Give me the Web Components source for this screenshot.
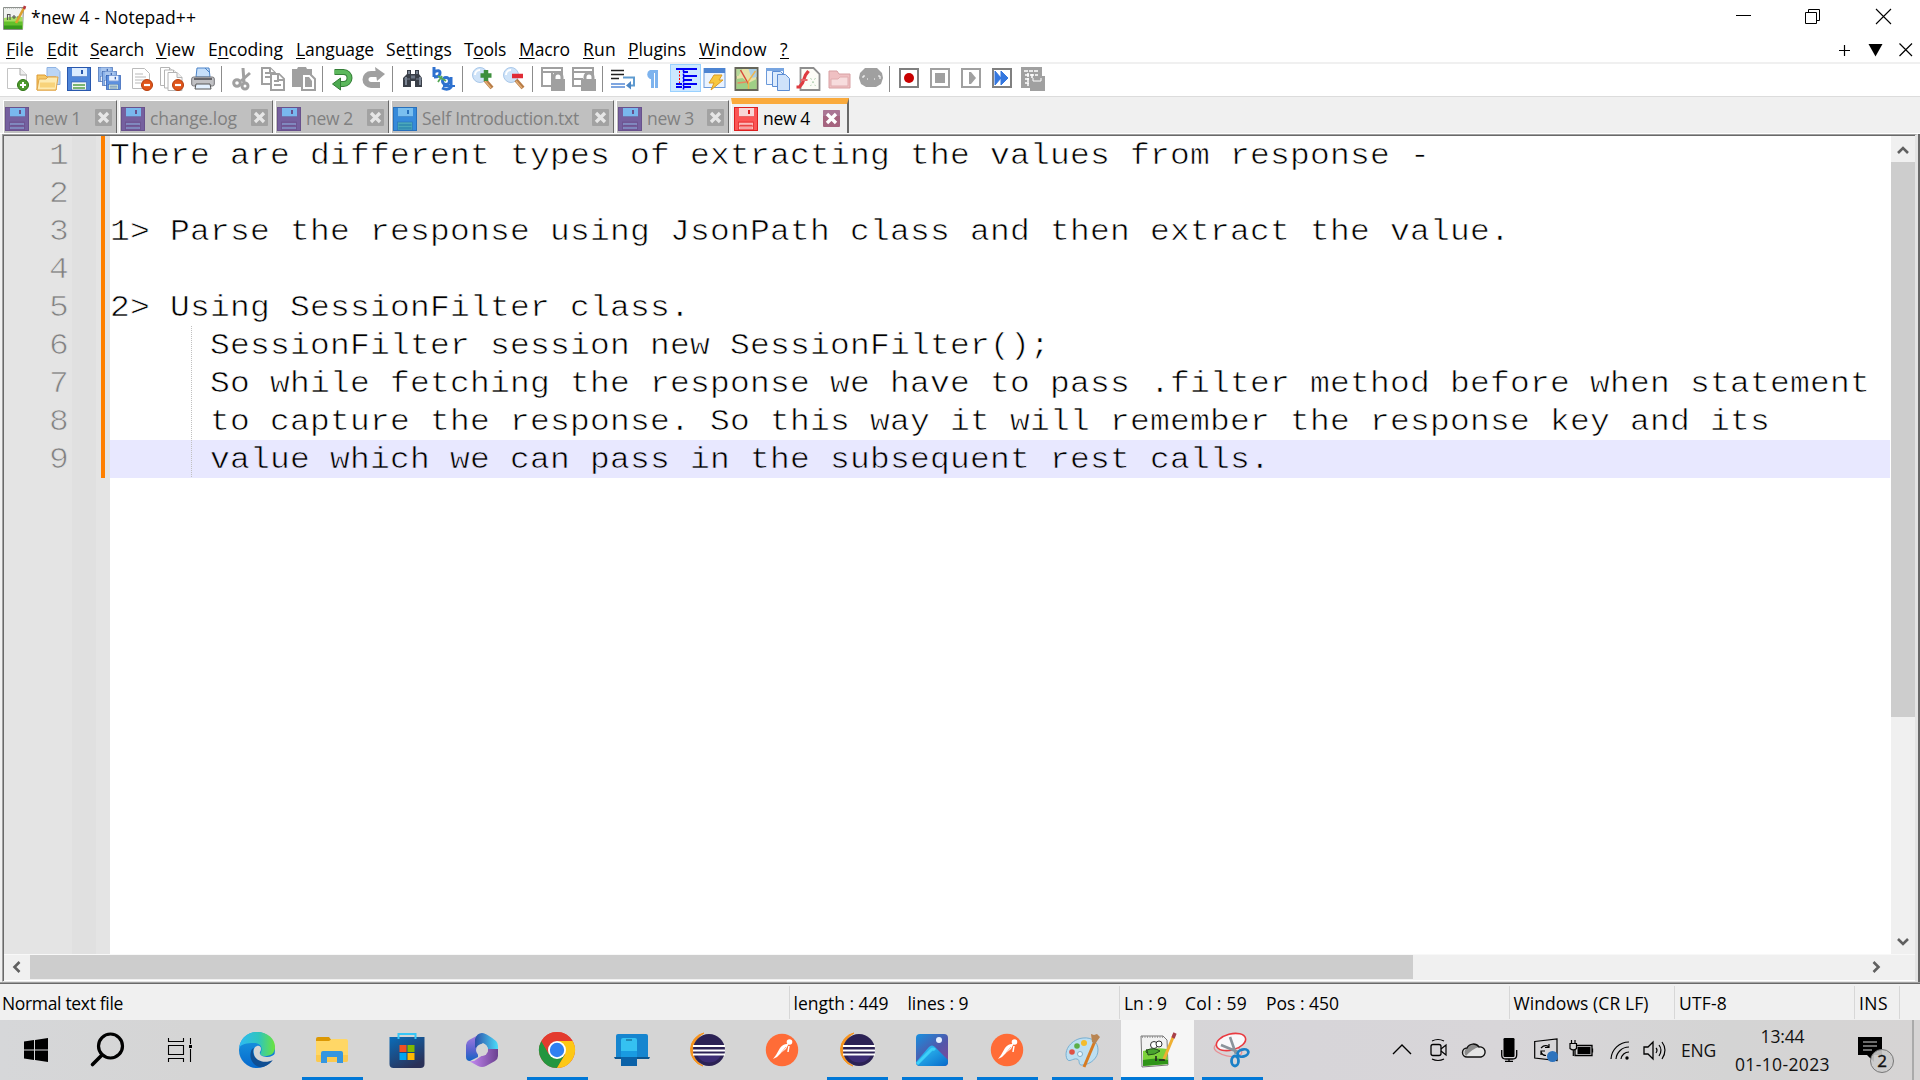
<!DOCTYPE html>
<html lang="en">
<head>
<meta charset="utf-8">
<title>*new 4 - Notepad++</title>
<style>
html,body{margin:0;padding:0;width:1920px;height:1080px;overflow:hidden;background:#fff}
body{font-family:"Open Sans","Noto Sans",sans-serif;font-size:17.5px;color:#000}
</style>
</head>
<body>
<npp-desktop></npp-desktop>
<script>
const floppy=(edge,body,metal,label)=>`<rect x=".5" y=".5" width="23" height="23" fill="${body}" stroke="${edge}"/><rect x="5" y="1" width="15" height="9" fill="${metal}"/><path d="M5 9.5h15" stroke="${edge}" opacity=".6"/><rect x="14" y="3" width="2" height="4" fill="${edge}"/><rect x="4.500" y="15" width="15" height="8" fill="${label}" stroke="${edge}" stroke-width=".6"/><path d="M6 18h12M6 21h12" stroke="${edge}" stroke-width="1.500" opacity=".75"/>`;
const page=(x,y,c='#b4b4b4')=>`<path d="M${x} ${y}h9l5 5v13h-14z" fill="#fff" stroke="${c}"/><path d="M${x+9} ${y}v5h5" fill="#eee" stroke="${c}"/>`;
const minus=`<circle cx="18" cy="18" r="5.500" fill="#e0561b" stroke="#b53c0c"/><path d="M15 18h6" stroke="#fff" stroke-width="2.200"/>`;
const frame=(c,s)=>`<rect x="2" y="2" width="18" height="18" fill="#fff" stroke="${c}" stroke-width="2"/><g transform="translate(-1 0)">${s}</g>`;
const lens=`<circle cx="9" cy="8" r="7.500" fill="#cfe3f8" stroke="#a9c8ea"/><path d="M4 8a5 5 0 0 1 5-5" stroke="#fff" stroke-width="2" fill="none"/><path d="M14 13l7 8" stroke="#b77b45" stroke-width="4"/><path d="M14 14l6 7" stroke="#e5b078" stroke-width="1.200"/>`;
const eclipse=`<path d="M15 1A17 17 0 0 0 14 34A19 19 0 0 1 15 1z" fill="#f7941e" stroke="#f7941e"/><circle cx="20" cy="18" r="16" fill="#2c2255"/><path d="M8 23h24a13 12 0 0 1-24 0z" fill="#42327f" opacity=".75"/><path d="M4 14h32M4 18.500h32M4 22.500h32" stroke="#fff" stroke-width="2.200"/>`;
const postman=`<circle cx="18" cy="18" r="16.200" fill="#ff6c37"/><circle cx="25.500" cy="10" r="2.800" fill="#fff"/><path d="M23 12q-4 0-7 4l-4 7-3 4 4-2 4-4 5-4 3-6z" fill="#fff"/><path d="M25 14l-1 6" stroke="#fff" stroke-width="1.500"/><path d="M22 15l-5 6" stroke="#ff9c79" stroke-width=".8"/>`;
const ICONS={
 app:[24,`<path d="M.5 1.500h20l-1 22H.5z" fill="#f0f2f0" stroke="#8a8f8a"/><path d="M1 12q9-2 18.500-1v12H1z" fill="#a5dd63"/><path d="M1 15.500h18.500V23H1z" fill="#63c02c"/><path d="M1 19.500h18V23H1z" fill="#37991c"/><path d="M2 2h18" stroke="#999" stroke-dasharray="1 1"/><path d="M4.500 14V8.500h2.500V14M9 11h4M11 9v4M14 11h3" stroke="#555" stroke-width="1.100" fill="none"/><path d="M21 2L13 17" stroke="#dca02f" stroke-width="2.600"/><path d="M22 0l-1 3" stroke="#b7383f" stroke-width="2.600"/>`],
 new:[24,`<path d="M2.500 1.500h13l6 6v14h-19z" fill="#fff" stroke="#c4c4c4"/><path d="M15 1v7h7" fill="#eee" stroke="#aaa"/><circle cx="18" cy="18" r="5.500" fill="#4d9a2b" stroke="#2e7415"/><path d="M15 18h6M18 15v6" stroke="#fff" stroke-width="2"/>`],
 open:[24,`<path d="M11 .5h9l4 4v13H11z" fill="#bad5f6" stroke="#8fb3e3"/><path d="M1 8h8l2 2h9v13H1z" fill="#f5c866" stroke="#dd9a35"/><path d="M3 12h7l2-2h10l-2 13H1z" fill="#fdebb2" stroke="#e2a545"/><path d="M4 18h15" stroke="#f8d37a" stroke-width="5"/>`],
 save:[24,floppy('#2857ad','#4f86da','#dcecff','#f2f8f2')+'<path d="M6 18h12M6 21h12" stroke="#79bd55" stroke-width="1.500"/>'],
 saveall:[24,`<g transform="scale(.62)">${floppy('#3e66ad','#8cb3ea','#a9c6ee','#fff')}</g><g transform="translate(4 4) scale(.62)">${floppy('#3e66ad','#8cb3ea','#a9c6ee','#fff')}</g><g transform="translate(8 8) scale(.62)">${floppy('#2857ad','#5d90de','#e8f1ff','#e4f3da')}</g>`],
 close:[24,`<path d="M3.500 1.500h12l5 5v15h-17z" fill="#fff" stroke="#bbb"/><path d="M6 7h8M6 10h11M6 13h11M6 16h6" stroke="#b9b9b9"/>${minus}`],
 closeall:[24,page(.5,.5)+page(4.5,3)+page(8,5.5)+minus],
 print:[24,`<path d="M6 1h12l1 9H5z" fill="#c6dffa" stroke="#4a83c8"/><path d="M14 1l5 5" stroke="#4a83c8"/><rect x=".7" y="10" width="22.600" height="9" rx="2" fill="#c1c1c4" stroke="#747478"/><path d="M3 12h18" stroke="#65656a" stroke-width="2"/><path d="M5 17h14l1 5H4z" fill="#e4f1ff" stroke="#555"/>`],
 cut:[24,`<g stroke="#a0a0a0" fill="none" stroke-width="3"><path d="M13 1l1 14M20 6l-9 8"/><circle cx="7" cy="16" r="3.300"/><circle cx="15" cy="19" r="3"/></g>`],
 copy:[24,`<g fill="#fff" stroke="#a0a0a0" stroke-width="2"><path d="M1 1h8l5 5v11H1z"/><path d="M4 6h5M4 10h5M9 1v5h5"/><path d="M10 7h8l5 5v11H10z"/><path d="M13 14h5M13 18h7M17 7v6h6"/></g>`],
 paste:[24,`<path d="M0 2h5l1-2h8l1 2h5v18H0z" fill="#a0a0a0"/><path d="M10 7h8l5 5v11H10z" fill="#fff" stroke="#a0a0a0" stroke-width="2"/><path d="M13 10h4l3 4v6h-7z" fill="#a0a0a0"/>`],
 undo:[24,`<g transform="translate(-.5 0)"><path d="M4 5h9a5 5 0 0 1 0 12H9" fill="none" stroke="#357f38" stroke-width="6"/><path d="M4 5h9a5 5 0 0 1 0 12H9" fill="none" stroke="#5cb85c" stroke-width="4"/><path d="M2 17l8-6v12z" fill="#4da950" stroke="#357f38"/></g>`],
 redo:[24,`<path d="M15 7H9a5 5 0 0 0 0 11h9" fill="none" stroke="#a0a0a0" stroke-width="6"/><path d="M13 0l10 7-8 7z" fill="#a0a0a0"/>`],
 find:[24,`<path d="M6 3h4v4h4V3h4v4l3 4v9h-7v-6h-4v6H2v-9l4-4z" fill="#3a3f48"/><path d="M5 10v8M19 10v8M8 4v3M16 4v3" stroke="#9aa5b5" stroke-width="1.400"/><path d="M3 12h6M15 12h6" stroke="#737d8c" stroke-width="1.200"/><path d="M10 10h4" stroke="#6d7684" stroke-width="3"/>`],
 replace:[24,`<g fill="none" stroke="#2e71cf" stroke-width="3"><path d="M2 0v10M2 5q6-3 6 1t-6 4"/><circle cx="14" cy="14" r="3.500"/><path d="M19 10v10q-3 4-9 1"/></g><path d="M6 9l8 5M10 9l-4 6" stroke="#56a956" stroke-width="1.800"/><path d="M11 19h12" stroke="#2e71cf" stroke-width="2"/>`],
 zin:[24,lens+`<path d="M15 3v11M9.500 8.500h11" stroke="#3c8f3c" stroke-width="4.500"/>`],
 zout:[24,lens+`<path d="M10 9h11" stroke="#e02b35" stroke-width="4.500"/>`],
 syncv:[24,`<path d="M1 1h20v18H1zM1 5h20M11 5v14" fill="none" stroke="#a0a0a0" stroke-width="2"/><path d="M13 12v-2a4 4 0 0 1 8 0v2" fill="none" stroke="#a0a0a0" stroke-width="3"/><path d="M10 12h14v12H10z" fill="#a0a0a0"/>`],
 synch:[24,`<path d="M1 1h20v18H1zM1 5h20M1 12h10" fill="none" stroke="#a0a0a0" stroke-width="2"/><path d="M13 12v-2a4 4 0 0 1 8 0v2" fill="none" stroke="#a0a0a0" stroke-width="3"/><path d="M9 12h15v12H9z" fill="#a0a0a0"/>`],
 wrap:[24,`<path d="M0 3.500h13M0 7.500h13" stroke="#222" stroke-width="1.500"/><path d="M0 11.500h8" stroke="#222" stroke-width="1.500"/><path d="M0 17h14M0 20h14" stroke="#7fa6e0" stroke-width="2"/><path d="M12 10.500h11v8h-4" fill="none" stroke="#5f9bd0" stroke-width="2"/><path d="M20 14l-5 4.500 5 4z" fill="#4c86c4"/>`],
 para:[24,`<path d="M16 3H8a5 5 0 0 0 0 9h1v9h3V6h1v15h3z" fill="#7db3ee"/>`],
 indent:[24,`<path d="M2 2h21M9 5h5M9 9h14M9 13h9M2 17h6M9 17h14M2 20h6M9 20h8" stroke="#0000f5" stroke-width="2"/><path d="M5.500 4v12" stroke="#f00" stroke-dasharray="2 1.500"/><path d="M9.500 3v20" stroke="#00f" stroke-width="1.600" stroke-dasharray="2 1.500"/>`],
 flash:[24,`<rect x="0" y="1.500" width="21" height="19" fill="#eaf3ff" stroke="#6d9bdb"/><path d="M0 1h21v5H0z" fill="#4d84d2"/><path d="M10 8h8l-3 5h4L7 23l3-7H5z" fill="#f8c73f" stroke="#dc9b25"/>`],
 map:[24,`<g transform="translate(-.5 0)"><rect x="1" y="1" width="22" height="22" fill="#e6e2a8" stroke="#66665a" stroke-width="2"/><path d="M2 12l6-1 6 5 8-4v10H2z" fill="#9fcf86"/><path d="M14 2h8v8l-5 1z" fill="#a9cfe6"/><path d="M2 2h6l-4 7H2z" fill="#b5d99a"/><path d="M6 3l8 14" stroke="#d9493a" stroke-width="1.500"/><path d="M21 4L14 14v8" stroke="#efb34b" stroke-width="1.400" fill="none"/><path d="M3 16l9-1" stroke="#e9895e" stroke-width="1.300"/></g>`],
 docs:[24,`<path d="M.5 1.500h17v16H.5z" fill="#eef5ff" stroke="#6b9ada"/><path d="M0 1h18v3H0z" fill="#78a5e0"/><path d="M6.500 4.500h8l3 3v12h-11z" fill="#dcebfc" stroke="#5c8dd4"/><path d="M11.500 7.500h8l4 4v12h-12z" fill="#cfe2fa" stroke="#5c8dd4"/>`],
 func:[24,`<g transform="translate(-.5 0)"><path d="M4 1h13l6 6v16H4z" fill="#fcfcf6" stroke="#8e8e8e" stroke-width="1.800"/><path d="M0 20h3l3-4 3-8 3-4" fill="none" stroke="#df3b40" stroke-width="3.200"/><path d="M4 13h7" stroke="#e5686b" stroke-width="2"/><path d="M14 11l5 8M19 11l-5 8" stroke="#b5d3b5" stroke-dasharray="2 2"/></g>`],
 folder:[24,`<path d="M1 4h8l2 3h11v14H1z" fill="#efc0c2" stroke="#d8a0a3"/><path d="M3 12h7l2-2h8v9H3z" fill="#f7dcdd" stroke="#e0adb0"/>`],
 eye:[24,`<path d="M6 1h12l5 5 1 5-2 6-5 3H7l-5-3-2-6 1-5z" fill="#a0a0a0"/><path d="M4 11v-2h2M19 9h2v3M8 12h1M15 12h1" stroke="#fff" fill="none"/>`],
 rec:[24,frame('#808080','<circle cx="12" cy="11" r="5" fill="#c80000"/>')],
 stop:[24,frame('#a0a0a0','<path d="M7 6h10v10H7z" fill="#a0a0a0"/>')],
 play:[24,frame('#a0a0a0','<path d="M10 5v12h2l5-6-5-6z" fill="#a0a0a0"/>')],
 ff:[24,frame('#808080','<path d="M5 4v14l6-7zM11 4v14l7-7z" fill="#3477df" stroke="#3477df"/>')],
 macro:[24,`<g transform="translate(-1 0)"><path d="M0 0h21v9h3v15H9v-3H0z" fill="#a0a0a0"/><path d="M3 4h15M4 8h13M4 12h5M4 16h5M7 6v13M11 7v5" stroke="#fff" stroke-width="1.500" stroke-dasharray="4 1"/><path d="M12 11v3h8v-3" stroke="#fff" fill="none"/></g>`],
 fblue:[24,floppy('#68518c','#75609f','#79b8ee','#755a99')+'<path d="M5 17h14M5 21h14" stroke="#8fb7e7" stroke-width="1.200"/>'],
 fsaved:[24,floppy('#2870bb','#368ada','#7abfef','#4ba8ba')+'<path d="M5 18h14M5 21h14" stroke="#3295a9" stroke-width="1.200"/>'],
 fred:[24,floppy('#dc2020','#fb5555','#f8d7d7','#fa7777')+'<path d="M5 17h14M5 21h14" stroke="#fff" stroke-width="1.200"/>'],
 x0:[17,`<rect width="17" height="17" rx="1" fill="#a2a2a2"/><path d="M4 4l9 9M13 4l-9 9" stroke="#e6e6e6" stroke-width="3.300"/>`],
 x1:[17,`<rect width="17" height="17" rx="1" fill="#a5647f"/><path d="M0 0h17v6H0z" fill="#b28caf" opacity=".45"/><path d="M4 4l9 9M13 4l-9 9" stroke="#fff" stroke-width="3.300"/>`],
 min:[16,`<path d="M1 8.500h15" stroke="#000"/>`],
 max:[16,`<path d="M.5 3.500h11v11H.5zM3.500 3.500v-3h11v11h-3" fill="none" stroke="#000"/>`],
 cls:[16,`<path d="M1 0l15 15M16 0L1 15" stroke="#000" stroke-width="1.100"/>`],
 plus:[14,`<path d="M2 7.500h11M7.500 2v11" stroke="#000" stroke-width="1.200"/>`],
 down:[14,`<path d="M.5 1h14l-7 12.500z"/>`],
 cls2:[14,`<path d="M.5.500l12.500 12.500M13 .5L.5 13" stroke="#000" stroke-width="1.200"/>`],
 au:[12,`<path d="M1 9l5-5 5 5" fill="none" stroke="#606060" stroke-width="2.600"/>`],
 ad:[12,`<path d="M1 3l5 5 5-5" fill="none" stroke="#606060" stroke-width="2.600"/>`],
 al:[12,`<path d="M8.500 1l-5 5 5 5" fill="none" stroke="#606060" stroke-width="2.600"/>`],
 ar:[12,`<path d="M3.500 1l5 5-5 5" fill="none" stroke="#606060" stroke-width="2.600"/>`],
 win:[24,`<path d="M0 3.400L10 2v9.500H0zM11 1.900L24 0v11.500H11zM0 12.500h10V22L0 20.600zM11 12.500h13V24l-13-1.900z"/>`],
 search:[36,`<circle cx="20.500" cy="14" r="12" fill="none" stroke="#000" stroke-width="3.200"/><path d="M12 23L2.500 32.500" stroke="#000" stroke-width="3.600" stroke-linecap="round"/>`],
 task:[24,`<path d="M.5 0v3.500h15V0M.5 7.500h15v9H.5zM.5 24v-3.500h15V24M22.500 0v6M22.500 11v13" fill="none" stroke="#000" stroke-width="1.100"/><path d="M21 7h3v3h-3z"/>`],
 edge:[36,`<defs><linearGradient id="a"><stop stop-color="#2ebaf5"/><stop offset=".55" stop-color="#2fc5bd"/><stop offset="1" stop-color="#6be43b"/></linearGradient><linearGradient id="b" x2="0" y2="1"><stop stop-color="#1b9de2"/><stop offset="1" stop-color="#0669cd"/></linearGradient></defs><circle cx="18" cy="18" r="18" fill="url(#b)"/><path d="M0 16C2 5 9 0 18 0c11 0 18 7 18 15 0 7-5 9-10 9-4 0-6-1-4-4 2-5-1-9-7-9C8 11 2 12 0 16z" fill="url(#a)"/><path d="M13 17c-5 10 3 19 10 18C29 34 33 30 34 27c-8 4-18 2-20-6 0-2 0-3 1-5z" fill="#104f93"/><path d="M18 14c4-1 5 3 3 6-1 3 2 5 7 5 4 0 7-2 9-4v5l-3 2c-8 4-18 1-19-6-1-4 0-7 3-8z" fill="#d5d5d5"/>`],
 explorer:[36,`<path d="M2 7q0-2 2-2h11l3 4H2z" fill="#dc9804"/><path d="M2 9h13l3-2h14q2 0 2 2v19q0 2-2 2H4q-2 0-2-2z" fill="#ffd766"/><path d="M2 23h32v5q0 2-2 2H4q-2 0-2-2z" fill="#fbc94e"/><path d="M7 31V21q0-2 2-2h18q2 0 2 2v10h-6v-6H13v6z" fill="#3596e0"/>`],
 store:[36,`<defs><linearGradient id="a" x2=".6" y2="1"><stop stop-color="#0a6dba"/><stop offset="1" stop-color="#2a3158"/></linearGradient></defs><path d="M.5 5h35v27q0 4-4 4h-27q-4 0-4-4z" fill="url(#a)"/><path d="M9.500 7V2h17v5" fill="none" stroke="#37c6f6" stroke-width="2"/><path d="M10.500 13h7v7h-7z" fill="#f25022"/><path d="M18.500 13h7v7h-7z" fill="#7fba00"/><path d="M10.500 21h7v7h-7z" fill="#00a4ef"/><path d="M18.500 21h7v7h-7z" fill="#ffb900"/>`],
 m365:[36,`<defs><linearGradient id="a" x2="0" y2="1"><stop stop-color="#b180e3"/><stop offset=".6" stop-color="#5a63d0"/><stop offset="1" stop-color="#1466c4"/></linearGradient><linearGradient id="b"><stop stop-color="#2e4fa8"/><stop offset="1" stop-color="#4bdcfa"/></linearGradient><linearGradient id="c"><stop stop-color="#c78bf5"/><stop offset="1" stop-color="#6b4190"/></linearGradient></defs><path d="M18 1l-13 7q-3 2-3 5v12q0 4 4 4l8-4V12q0-2 2-3l7-6z" fill="url(#a)"/><path d="M18 1q4 0 14 8 2 2 2 5v10l-10-6q0-5-5-7l-8 5V7q2-6 7-6z" fill="url(#b)"/><path d="M34 17v7q0 3-3 5l-9 5q-4 2-8 0l-9-5q5 1 8-2l9-6q2-1 2-4z" fill="url(#c)"/><circle cx="18" cy="18" r="6" fill="#d5d5d5"/>`],
 chrome:[36,`<circle cx="18" cy="18" r="18" fill="#ea4335"/><path d="M2.400 9A18 18 0 0 0 18 36l8-13.500L10.200 22.500z" fill="#24963f"/><path d="M18 36A18 18 0 0 0 33.600 9H18l8 13.500z" fill="#fdc815"/><path d="M2.400 9l7.800 13.500L18 9h15.600A18 18 0 0 0 2.400 9z" fill="#e33b2e"/><circle cx="18" cy="18" r="9" fill="#fff"/><circle cx="18" cy="18" r="7.200" fill="#3080f2"/>`],
 phone:[36,`<path d="M2 4q0-2 2-2h28q2 0 2 2v21H2z" fill="#1685cf"/><path d="M0 25h36l-1 2H1z" fill="#0d568f"/><path d="M7 8q0-2 2-2h12q2 0 2 2v11H7z" fill="#35c1f1"/><path d="M7 19h16v7H7z" fill="#199be2"/><path d="M7 25h16v9H7z" fill="#0b62a8"/><path d="M12 8h6" stroke="#14658f" stroke-width="1.200"/>`],
 eclipse:[36,eclipse],postman:[36,postman],
 photos:[36,`<defs><linearGradient id="a" x2=".8" y2="1"><stop stop-color="#1790df"/><stop offset=".6" stop-color="#5355a9"/><stop offset="1" stop-color="#7b4b9b"/></linearGradient><linearGradient id="b" y2="1"><stop stop-color="#35cdfa"/><stop offset="1" stop-color="#0869c9"/></linearGradient></defs><rect x="2" y="2" width="32" height="32" rx="4" fill="url(#a)"/><path d="M2 30l13-15q3-3 6 0l13 13v2q0 4-4 4H6q-4 0-4-4z" fill="url(#b)"/><path d="M3 32l14-14q2-2 4 0" stroke="#3ed0f8" stroke-width="3" fill="none"/><circle cx="25" cy="8" r="3" fill="#e5efff"/>`],
 paint:[36,`<path d="M3 27C-1 18 8 7 19 6c9-1 15 4 15 12 0 8-7 14-15 15-6 1-2-5-6-6-4-1-8 4-10 0z" fill="#bddff1" stroke="#79afd1"/><circle cx="8" cy="20" r="2.800" fill="#df5145"/><circle cx="13" cy="14" r="2.800" fill="#5bae48"/><circle cx="20" cy="11" r="3" fill="#f4bc2c"/><circle cx="16" cy="22" r="2.500" fill="#eff8fd" stroke="#83adc5"/><path d="M31 9L20 35" stroke="#d77b22" stroke-width="3"/><path d="M27 2l3 1 3-1 3 3-5 7-3-2z" fill="#b98552"/>`],
 npp:[36,`<path d="M2 4h22l4 4 1 25-26 2z" fill="#f2f2f2" stroke="#777"/><path d="M3 5h21" stroke="#888" stroke-width="1.500" stroke-dasharray="1 1.500"/><path d="M4 19q12-4 24-2l1 15-25 2z" fill="#7dd23a"/><path d="M4 28q15-3 25 0v4l-25 2z" fill="#2f9418"/><circle cx="15" cy="13" r="3.500" fill="#fff" stroke="#333"/><circle cx="20" cy="12" r="3" fill="#fff" stroke="#333"/><path d="M8 18q7-3 13 1-5 4-12 4zM8 21q-2-1 0-4" fill="#4aa52f" stroke="#234f1b"/><path d="M17 24v5M20 28h6" stroke="#222" stroke-width="1.600"/><path d="M35 3L25 27" stroke="#efb033" stroke-width="3"/><path d="M36 1l-2 5" stroke="#a83f4a" stroke-width="3.400"/>`],
 snip:[36,`<ellipse cx="14" cy="18" rx="14" ry="6" fill="none" stroke="#e88f94" stroke-width="1.300" transform="rotate(12 14 18)"/><ellipse cx="17" cy="10" rx="15" ry="8" fill="#f8f8fa" stroke="#e93a40" stroke-width="1.600" transform="rotate(-15 17 10)"/><path d="M16 5l6 17M7 13l17 7" stroke="#8a939b" stroke-width="2.600"/><ellipse cx="29" cy="21" rx="5.500" ry="3.500" fill="none" stroke="#1b80c7" stroke-width="2.800" transform="rotate(-15 29 21)"/><ellipse cx="21" cy="29" rx="3.500" ry="5" fill="none" stroke="#1b80c7" stroke-width="2.800"/>`],
 tchev:[24,`<path d="M3 16l9-9 9 9" fill="none" stroke="#000" stroke-width="1.400"/>`],
 meet:[24,`<rect x="4" y="6.500" width="10" height="11" rx="2" fill="none" stroke="#000" stroke-width="1.300"/><path d="M14 11l5-4v10l-5-4M5 3q6-3 12 0M5 21q6 3 12 0" fill="none" stroke="#000" stroke-width="1.200"/>`],
 cloud:[24,`<path d="M5 19a4.500 4.500 0 0 1 0-9 7 7 0 0 1 12-1 5 5 0 0 1 2 10z" fill="#e5e5e5"/><path d="M4 18a5 5 0 0 1 1-8 7 7 0 0 1 12-1q-7 2-13 9z" fill="#8c8c8c"/><path d="M5 19a4.500 4.500 0 0 1 0-9 7 7 0 0 1 12-1 5 5 0 0 1 2 10z" fill="none" stroke="#111" stroke-width="1.400"/>`],
 mic:[24,`<rect x="6.500" y="0" width="11" height="19" rx="1.200"/><path d="M4.700 12v5q0 4 4 4h7q4 0 4-4v-5M12 21v2.500M8 23.400h8" fill="none" stroke="#000" stroke-width="1.300"/>`],
 upd:[24,`<path d="M.7 3.500L23 1v21.500L.7 20z" fill="none" stroke="#000" stroke-width="1.200"/><path d="M7 10q4-4 8-1M15 6v3.500h-4M7 17v-4h4M7 13.500q1 4 5 4" fill="none" stroke="#000" stroke-width="1.200"/><circle cx="18.500" cy="18.500" r="5.500" fill="#2d73bd"/>`],
 bat:[24,`<path d="M5 7.500h17v10H5zM22.500 10.500v4" fill="none" stroke="#000" stroke-width="1.300"/><path d="M7.500 9h13v7h-13z"/><path d="M0 5.500h6.500v5q-3 3-6.500 0zM1.500 2v3M5 2v3M3.300 12v6" fill="#d5d5d5" stroke="#000" stroke-width="1.200"/>`],
 wifi:[24,`<path d="M3 21A18 18 0 0 1 21 4M8 21A13 13 0 0 1 21 9M13 21A8 8 0 0 1 21 14" fill="none" stroke="#000" stroke-width="1.200"/><circle cx="19" cy="20" r="1.700"/>`],
 spk:[24,`<path d="M1 9h4l5-5v17l-5-5H1z" fill="none" stroke="#000" stroke-width="1.300"/><path d="M13 10q2 2 0 5M16 7q4 5 0 11M19 4q6 8 0 17" fill="none" stroke="#000" stroke-width="1.200"/>`],
 note:[24,`<path d="M0 0h24v18h-8v7l-7-7H0z"/><path d="M5 5h14M5 9h14M5 13h9" stroke="#d5d5d5" stroke-width="1.200"/>`]
};
const def=(n,f,after)=>customElements.define(n,class extends HTMLElement{
 constructor(){super();this.attachShadow({mode:'open'})}
 connectedCallback(){this.shadowRoot.innerHTML=f(this);if(after)after(this)}
});
def('ui-icon',e=>{const [s,b]=ICONS[e.getAttribute('name')];return `<style>:host{display:block;flex:none;width:${s}px;height:${s}px}svg{display:block;overflow:visible}</style><svg width="${s}" height="${s}" viewBox="0 0 ${s} ${s}">${b}</svg>`});
/* A single-line label whose tracking is adjusted so its text takes the width in "w". */
def('ui-label',()=>`<style>:host{display:block;white-space:pre;flex:none}</style><span><slot></slot></span>`,e=>{
 const s=e.shadowRoot.querySelector('span'),w=+e.getAttribute('w');
 if(w)s.style.letterSpacing=((w+2-s.getBoundingClientRect().width)/e.textContent.length)+'px';
});
def('title-bar',()=>`<style>:host{display:flex;height:36px;align-items:center;padding-left:3px;box-sizing:border-box}ui-icon:first-child{margin-top:-2px}ui-label{margin-left:4px;line-height:32px;margin-top:-2px}.c{margin-left:auto;display:flex;gap:54px;padding-right:29px;margin-top:-3px}</style><ui-icon name="app"></ui-icon><ui-label w="163">*new 4 - Notepad++</ui-label><div class="c"><ui-icon name="min"></ui-icon><ui-icon name="max"></ui-icon><ui-icon name="cls"></ui-icon></div>`);
const menu=[['<u>F</u>ile',7,26],['<u>E</u>dit',48,29],['<u>S</u>earch',91,52],['<u>V</u>iew',157,37],['E<u>n</u>coding',209,73],['<u>L</u>anguage',297,76],['Se<u>t</u>tings',387,64],['T<u>o</u>ols',465,40],['<u>M</u>acro',520,49],['<u>R</u>un',584,31],['<u>P</u>lugins',629,56],['<u>W</u>indow',700,66],['<u>?</u>',781,7]];
def('menu-bar',()=>`<style>:host{display:flex;height:26px;padding-left:6px;border-bottom:2px solid #f0f0f0;line-height:27px}div{flex:none}.r{margin-left:auto;display:flex;gap:17px;padding:7px 7px 0 0}u{text-underline-offset:2px;text-decoration-thickness:1px}</style>${menu.map((m,i)=>`<div style="width:${(menu[i+1]?menu[i+1][1]:800)-m[1]}px"><ui-label w="${m[2]}">${m[0]}</ui-label></div>`).join('')}<div class="r"><ui-icon name="plus"></ui-icon><ui-icon name="down"></ui-icon><ui-icon name="cls2"></ui-icon></div>`);
def('tool-bar',()=>`<style>:host{display:flex;height:32px;padding-left:2px;border-bottom:1px solid #dcdcdc}div{width:31px;height:28px;display:flex;box-sizing:border-box;padding:3px 0 0 3px}.on{background:#cce8ff;border:1px solid #99d1ff;padding:2px 0 0 3px}i{width:1px;height:26px;margin:2px 5px 0 2px;background:#8c8c8c}</style>${'new open save saveall close closeall print | cut copy paste | undo redo | find replace | zin zout | syncv synch | wrap para indent flash map docs func folder eye | rec stop play ff macro'.split(' ').map(n=>n=='|'?'<i></i>':`<div class="${n=='indent'?'on':''}"><ui-icon name="${n}"></ui-icon></div>`).join('')}`);
const tabs=[['new 1',114,45,'fblue'],['change.log',154,85,'fblue'],['new 2',114,45,'fblue'],['Self Introduction.txt',223,155,'fsaved'],['new 3',113,45,'fblue'],['new 4',118,45,'fred']];
def('tab-strip',()=>`<style>:host{display:flex;height:37px;background:#f0f0f0;padding-left:3px;gap:2px;align-items:flex-end;box-sizing:border-box;border-bottom:1px solid #fff}div{height:33px;background:#c0c0c0;color:#808080;border-left:1px solid #fff;border-top:1px solid #fff;border-right:1px solid #696969;box-sizing:border-box;display:flex;align-items:center;padding:3px 4px 0 1px}ui-label{margin-left:5px;line-height:26px;margin-top:-1px}.x{margin-left:auto;margin-top:-2px}.on{height:35px;background:#f0f0f0;color:#000;border-top:6px solid #faaa3c;border-right:2px solid #696969;padding:1px 7px 0 2px}.on ui-label{margin-top:-2px}.on .x{margin-top:-1px}</style>${tabs.map((t,i)=>`<div class="${i==5?'on':''}" style="width:${t[1]}px"><ui-icon name="${t[3]}"></ui-icon><ui-label w="${t[2]}">${t[0]}</ui-label><ui-icon class="x" name="${i==5?'x1':'x0'}"></ui-icon></div>`).join('')}`);
const T='     ';
const lines=['There are different types of extracting the values from response -','','1> Parse the response using JsonPath class and then extract the value.','','2> Using SessionFilter class.',T+'SessionFilter session new SessionFilter();',T+'So while fetching the response we have to pass .filter method before when statement',T+'to capture the response. So this way it will remember the response key and its',T+'value which we can pass in the subsequent rest calls.'];
def('code-line',e=>`<style>:host{display:flex;height:38px}.n{text-align:right;color:#808080;width:68px;padding-right:3px;background:#e4e4e4;-webkit-text-stroke:.8px #e4e4e4}.f{width:24px;background:#e0e0e0}.g{width:5px;background:#e4e4e4}.o{width:4px;background:#ff8000}.h{width:5px;background:#e4e4e4}.t{flex:1;white-space:pre;--b:${e.hasAttribute('cur')?'#e8e8ff':'#fff'};-webkit-text-stroke:.7px var(--b);background:var(--b);margin-right:1px;color:#000}.in{background:repeating-linear-gradient(#c0c0c0 0 1px,transparent 1px 2px) 81px 0/1px 100% no-repeat var(--b)}.n,.t{font:33px/38px "Liberation Mono",monospace;letter-spacing:.197px;box-sizing:border-box}span{display:block;transform:translateY(1px) scaleY(.92);transform-origin:0 28px}</style><div class="n"><span>${e.getAttribute('n')}</span></div><div class="f"></div><div class="g"></div><div class="o"></div><div class="h"></div><div class="t ${e.hasAttribute('ind')?'in':''}"><span><slot></slot></span></div>`);
def('scroll-bar',e=>e.hasAttribute('v')?`<style>:host{display:flex;flex-direction:column;align-items:center;justify-content:space-between;width:24px;background:#f0f0f0;padding:8px 0 6px;box-sizing:border-box}b{width:24px;height:555px;background:#cdcdcd;margin:6px 0 auto}</style><ui-icon name="au"></ui-icon><b></b><ui-icon name="ad"></ui-icon>`:`<style>:host{display:flex;align-items:center;height:24px;background:#f0f0f0;padding:0 33px 0 7px;border-top:1px solid #f8f8f8;border-bottom:1px solid #f0f0f0}b{height:24px;width:1383px;background:#cdcdcd;margin:0 auto 0 7px}</style><ui-icon name="al"></ui-icon><b></b><ui-icon name="ar"></ui-icon>`);
def('code-editor',()=>`<style>:host{display:flex;flex-direction:column;height:848px;margin:0 2px 0 2px;border-left:1px solid #a0a0a0;border-top:1px solid #a0a0a0;border-right:3px solid #e4e4e4;border-bottom:1px solid #e4e4e4;box-sizing:border-box}.in{border-left:1px solid #696969;border-top:1px solid #696969;flex:1;display:flex;flex-direction:column}.m{display:flex;height:818px}.d{flex:1;display:flex;flex-direction:column;background:#fff}.r{flex:1;display:flex}.r i{flex:none;width:68px;background:#e4e4e4}.r i+i{width:24px;background:#e0e0e0}.r i+i+i{width:14px;background:#e4e4e4}</style><div class="in"><div class="m"><div class="d">${lines.map((l,i)=>`<code-line n="${i+1}" ${i>4?'ind':''} ${i==8?'cur':''}>${l.replace(/>/g,'&gt;')}</code-line>`).join('')}<div class="r"><i></i><i></i><i></i></div></div><scroll-bar v></scroll-bar></div><scroll-bar></scroll-bar></div>`);
const cells=[[0,789,[['Normal text file',3,119]]],[789,1119,[['length : 449',794,93],['lines : 9',908,59]]],[1119,1509,[['Ln : 9',1124.5,41],['Col : 59',1185.5,60],['Pos : 450',1266.5,71]]],[1509,1674,[['Windows (CR LF)',1514,133]]],[1674,1854,[['UTF-8',1679.5,46]]],[1854,1899,[['INS',1859.5,27]]]];
def('status-bar',()=>`<style>:host{display:flex;height:38px;background:#f0f0f0;border-top:1px solid #a0a0a0;box-sizing:border-box;box-shadow:inset 0 1px #696969}div{display:flex;flex:none;border-right:1px solid #d7d7d7;box-sizing:border-box;margin:3px 0 1px}span{flex:none;line-height:34px}</style>${cells.map(c=>{let x=c[0];return `<div style="width:${c[1]-c[0]+(c[0]?0:1)}px">${c[2].map((t,i)=>{const nx=c[2][i+1]?c[2][i+1][1]-1:t[1]+t[2];const p=i?0:t[1]-1-x-(c[0]?.5:0);const w=nx-t[1]+1;return `<span style="margin-left:${p}px;width:${w}px"><ui-label w="${t[2]}">${t[0]}</ui-label></span>`}).join('')}</div>`}).join('')}`);
def('task-button',e=>`<style>:host{display:flex;flex:none;align-items:center;justify-content:center;width:73px;height:60px;box-sizing:border-box;padding:0 1px 0 0;position:relative}:host([sys]){width:72px;padding:0}:host([active]){background:#f6f6f6}.u{position:absolute;bottom:0;left:6px;right:6px;height:3px;background:#0078d7}:host([active]) .u{left:0;right:0}</style><ui-icon name="${e.getAttribute('name')}"></ui-icon>${e.hasAttribute('open')||e.hasAttribute('active')?'<div class="u"></div>':''}`);
const tray=[['tchev',1390],['meet',1427],['cloud',1462],['mic',1497],['upd',1534],['bat',1570],['wifi',1608],['spk',1643]];
def('system-tray',()=>`<style>:host{display:flex;height:60px;margin-left:auto;align-items:center;width:530px;color:#111}.e{margin-left:14px;width:55px}.c{width:97px;line-height:28px;display:flex;flex-direction:column;align-items:center;margin-left:-2px}.n{margin-left:27px;position:relative;top:-1px}.b{position:absolute;left:12px;top:12px;width:22px;height:22px;border:1px solid #777;border-radius:50%;background:#cbcbcbe8;display:flex;align-items:center;justify-content:center;font-size:17px;line-height:22px;-webkit-text-stroke:.4px #111}.s{margin-left:auto;margin-right:6px;width:2px;height:60px;background:#aaa}</style>${tray.map((t,i)=>`<ui-icon name="${t[0]}" style="margin-left:${i?t[1]-tray[i-1][1]-24:0}px"></ui-icon>`).join('')}<div class="e"><ui-label w="33">ENG</ui-label></div><div class="c"><ui-label w="42">13:44</ui-label><ui-label w="93">01-10-2023</ui-label></div><div class="n"><ui-icon name="note"></ui-icon><div class="b">2</div></div><div class="s"></div>`);
def('task-bar',()=>`<style>:host{display:flex;height:60px;background:linear-gradient(90deg,#d6d7d9 0,#d5d5d5 10%,#d5d5d5 55%,#d7d5d9 68%,#d8d6d9 78%,#d4d4d4 90%,#d6d4d4)}.a{display:flex;gap:2px;margin-left:5px}.s{display:flex}</style><div class="s"><task-button sys name="win"></task-button><task-button sys name="search"></task-button><task-button sys name="task"></task-button></div><div class="a">${[['edge'],['explorer','open'],['store'],['m365'],['chrome','open'],['phone'],['eclipse'],['postman'],['eclipse','open'],['photos','open'],['postman','open'],['paint','open'],['npp','active'],['snip','open']].map(a=>`<task-button name="${a[0]}" ${a[1]||''}></task-button>`).join('')}</div><system-tray></system-tray>`);
def('npp-desktop',()=>`<style>:host{display:flex;flex-direction:column;width:1920px;height:1080px;background:#fff}.w{height:1020px;display:flex;flex-direction:column}.w>*{flex:none}.ed{background:linear-gradient(90deg,#f0f0f0 0 2px,#fff 2px 1918px,#696969 1918px)}</style><div class="w"><title-bar></title-bar><menu-bar></menu-bar><tool-bar></tool-bar><tab-strip></tab-strip><div class="ed"><code-editor></code-editor></div><status-bar></status-bar></div><task-bar></task-bar>`);
</script>
</body>
</html>
